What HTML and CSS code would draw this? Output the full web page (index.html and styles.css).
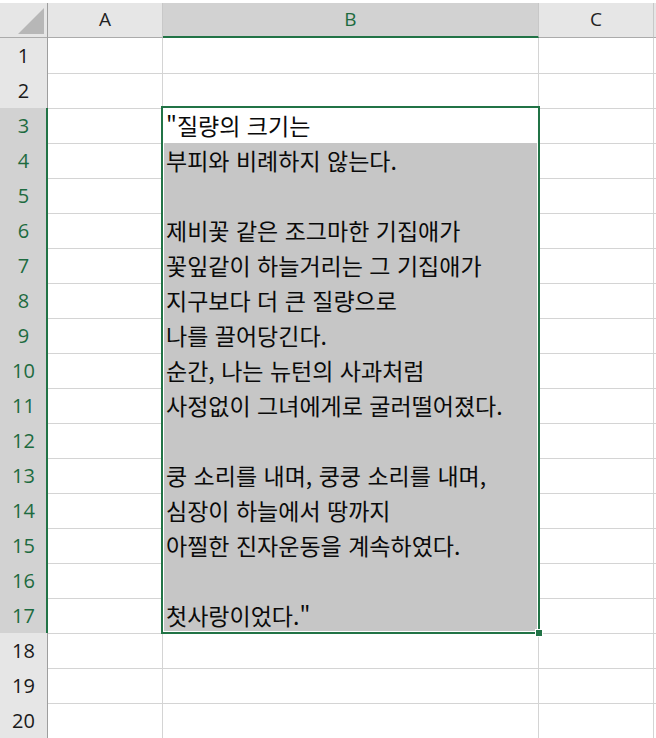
FILE: index.html
```html
<!DOCTYPE html>
<html lang="ko">
<head>
    <meta charset="utf-8">
    <title>Sheet</title>
    <link rel="stylesheet" href="styles.css">
</head>

<body>
    <div class="sheet">
        <div class="row head">
            <div class="corner"><span class="tri"></span></div>
            <div class="colhead">A</div>
            <div class="colhead on">B</div>
            <div class="colhead">C</div>
            <div class="colhead edge"></div>
        </div>

        <div class="row"><div class="rowhead">1</div><div class="cell"></div><div class="cell"></div><div class="cell"></div><div class="cell"></div></div>
        <div class="row"><div class="rowhead">2</div><div class="cell"></div><div class="cell"></div><div class="cell"></div><div class="cell"></div></div>
        <div class="row"><div class="rowhead on">3</div><div class="cell"></div><div class="cell">"질량의 크기는</div><div class="cell"></div><div class="cell"></div></div>
        <div class="row"><div class="rowhead on">4</div><div class="cell"></div><div class="cell sel">부피와 비례하지 않는다.</div><div class="cell"></div><div class="cell"></div></div>
        <div class="row"><div class="rowhead on">5</div><div class="cell"></div><div class="cell sel"></div><div class="cell"></div><div class="cell"></div></div>
        <div class="row"><div class="rowhead on">6</div><div class="cell"></div><div class="cell sel">제비꽃 같은 조그마한 기집애가</div><div class="cell"></div><div class="cell"></div></div>
        <div class="row"><div class="rowhead on">7</div><div class="cell"></div><div class="cell sel">꽃잎같이 하늘거리는 그 기집애가</div><div class="cell"></div><div class="cell"></div></div>
        <div class="row"><div class="rowhead on">8</div><div class="cell"></div><div class="cell sel">지구보다 더 큰 질량으로</div><div class="cell"></div><div class="cell"></div></div>
        <div class="row"><div class="rowhead on">9</div><div class="cell"></div><div class="cell sel">나를 끌어당긴다.</div><div class="cell"></div><div class="cell"></div></div>
        <div class="row"><div class="rowhead on">10</div><div class="cell"></div><div class="cell sel">순간, 나는 뉴턴의 사과처럼</div><div class="cell"></div><div class="cell"></div></div>
        <div class="row"><div class="rowhead on">11</div><div class="cell"></div><div class="cell sel">사정없이 그녀에게로 굴러떨어졌다.</div><div class="cell"></div><div class="cell"></div></div>
        <div class="row"><div class="rowhead on">12</div><div class="cell"></div><div class="cell sel"></div><div class="cell"></div><div class="cell"></div></div>
        <div class="row"><div class="rowhead on">13</div><div class="cell"></div><div class="cell sel">쿵 소리를 내며, 쿵쿵 소리를 내며,</div><div class="cell"></div><div class="cell"></div></div>
        <div class="row"><div class="rowhead on">14</div><div class="cell"></div><div class="cell sel">심장이 하늘에서 땅까지</div><div class="cell"></div><div class="cell"></div></div>
        <div class="row"><div class="rowhead on">15</div><div class="cell"></div><div class="cell sel">아찔한 진자운동을 계속하였다.</div><div class="cell"></div><div class="cell"></div></div>
        <div class="row"><div class="rowhead on">16</div><div class="cell"></div><div class="cell sel"></div><div class="cell"></div><div class="cell"></div></div>
        <div class="row"><div class="rowhead on">17</div><div class="cell"></div><div class="cell sel">첫사랑이었다."</div><div class="cell"></div><div class="cell"></div></div>
        <div class="row"><div class="rowhead">18</div><div class="cell"></div><div class="cell"></div><div class="cell"></div><div class="cell"></div></div>
        <div class="row"><div class="rowhead">19</div><div class="cell"></div><div class="cell"></div><div class="cell"></div><div class="cell"></div></div>
        <div class="row"><div class="rowhead">20</div><div class="cell"></div><div class="cell"></div><div class="cell"></div><div class="cell"></div></div>

        <div class="selection"><span class="handle"></span></div>
    </div>
</body>

</html>
```

FILE: styles.css
```css
body {
    margin: 0;
    background-color: #ffffff;
    font-family: "Noto Sans CJK KR", "Noto Sans", sans-serif;
    overflow: hidden;
}

.sheet {
    position: relative;
    margin-top: 3px;
}

.row {
    display: grid;
    grid-template-columns: 48px 115px 376px 115px 1fr;
    height: 35px;
}

.row > div {
    box-sizing: border-box;
    border-right: 1px solid #d4d4d4;
    border-bottom: 1px solid #d4d4d4;
}

.head > div {
    background-color: #e6e6e6;
    border-bottom: 1px solid #ababab;
    border-right: 1px solid #c8c8c8;
}

.corner {
    position: relative;
}

.head > .corner {
    border-right: 1px solid #9e9e9e;
}

.tri {
    position: absolute;
    right: 3px;
    bottom: 3px;
    width: 0;
    height: 0;
    border-left: 26px solid transparent;
    border-bottom: 26px solid #b7b7b7;
}

.colhead {
    font-family: "Open Sans", "Noto Sans", sans-serif;
    font-size: 19px;
    color: #222;
    text-align: center;
    line-height: 33px;
}

.head > .colhead.on {
    background-color: #d2d2d2;
    color: #1d6b40;
    border-bottom: 2px solid #217346;
}

.head > .colhead.edge {
    border-right: none;
}

.row > .rowhead {
    background-color: #e6e6e6;
    border-right: 1px solid #9e9e9e;
    border-bottom: 1px solid #b4b4b4;
    font-family: "Open Sans", "Noto Sans", sans-serif;
    font-size: 20px;
    color: #1a1a1a;
    text-align: center;
    line-height: 35px;
}

.row > .rowhead.on {
    background-color: #d2d2d2;
    color: #1d6b40;
    border-right: 2px solid #217346;
    padding-left: 1px;
}

.cell {
    font-size: 23px;
    color: #0a0a0a;
    padding-left: 3px;
    line-height: 34px;
    white-space: nowrap;
}

.row > .cell.sel {
    background-color: #c6c6c6;
    border-bottom: 1px solid #a9a9a9;
}

.selection {
    position: absolute;
    left: 161px;
    top: 103px;
    width: 379px;
    height: 528px;
    box-sizing: border-box;
    border: 2px solid #217346;
    box-shadow: inset 0 0 0 1px #ffffff;
}

.handle {
    position: absolute;
    right: -5px;
    bottom: -5px;
    width: 6px;
    height: 6px;
    background-color: #217346;
    border: 1px solid #ffffff;
}
```
